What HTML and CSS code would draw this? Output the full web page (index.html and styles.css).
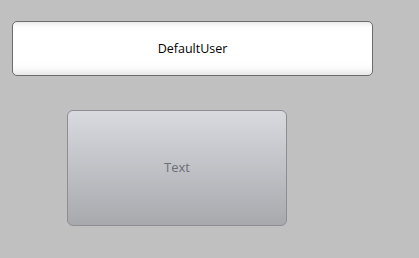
FILE: index.html
```html
<!DOCTYPE html>
<html>
<head>
<meta charset="utf-8">
<link rel="stylesheet" href="styles.css">
</head>
<body>
<div class="page">
  <div class="user-field">DefaultUser</div>
  <div class="text-button">Text</div>
</div>
</body>
</html>
```
FILE: styles.css
```css
html, body {
  margin: 0;
  padding: 0;
  background: #c0c0c0;
  width: 419px;
  height: 258px;
  overflow: hidden;
}
.page {
  display: flex;
  flex-direction: column;
  align-items: flex-start;
  padding: 21px 0 0 12px;
  font-family: "Open Sans", "Noto Sans", sans-serif;
}
.user-field {
  box-sizing: border-box;
  width: 361px;
  height: 55px;
  border: 1px solid #6c6c6c;
  border-radius: 5px;
  background: linear-gradient(to bottom, #ececec 0px, #fdfdfd 5px, #ffffff 12px, #ffffff 40px, #fbfbfb 46px, #e8e8e8 53px);
  display: flex;
  align-items: center;
  justify-content: center;
  font-size: 12.5px;
  color: #000;
  padding-bottom: 1px;
}
.text-button {
  box-sizing: border-box;
  margin: 34px 0 0 55px;
  width: 220px;
  height: 116px;
  border: 1px solid #8e8e92;
  border-radius: 6px;
  background: linear-gradient(to bottom, #d9dadf, #a8a9ad);
  display: flex;
  align-items: center;
  justify-content: center;
  font-size: 13px;
  color: #6b6e76;
  padding-bottom: 2px;
}
```
